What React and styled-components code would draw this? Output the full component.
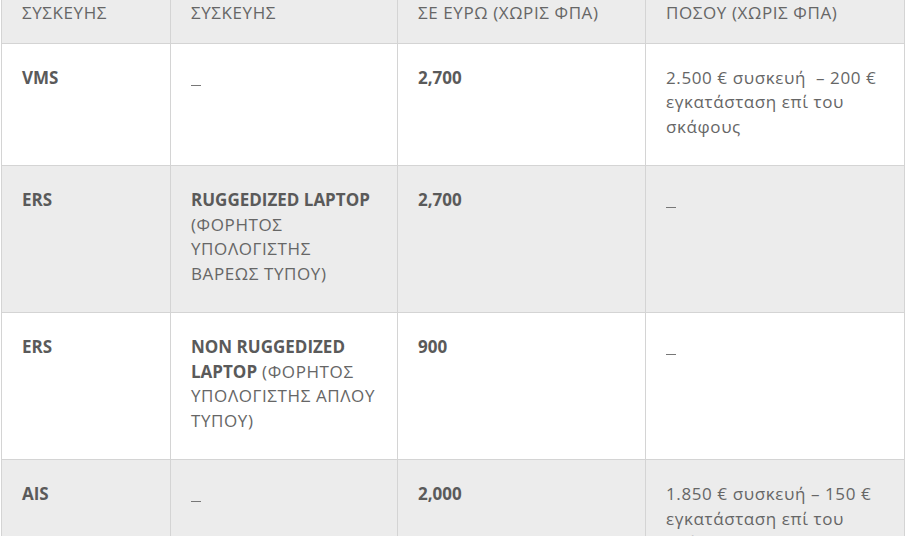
import styled, { createGlobalStyle } from "styled-components";

const GlobalStyle = createGlobalStyle`
  body {
    margin: 0;
    background: #fff;
    font-family: "Open Sans", "Noto Sans", sans-serif;
    color: #666;
  }
`;

const PriceTable = styled.table`
  margin-left: 1px;
  width: 903px;
  border-collapse: collapse;
  table-layout: fixed;
  font-size: 17px;
  line-height: 24.5px;
  letter-spacing: 0.6px;
`;

const HeadCell = styled.th`
  text-align: left;
  font-weight: 400;
  color: #666;
  background: #ececec;
  border: 1px solid #d4d4d4;
  border-top: none;
  padding: 1px 20px 17px;
  vertical-align: top;
`;

const Row = styled.tr`
  background: ${(p) => (p.$shaded ? "#ececec" : "#fff")};
`;

const Cell = styled.td`
  border: 1px solid #d4d4d4;
  padding: 22px 20px 26px;
  vertical-align: top;
  color: #666;
`;

const Strong = styled.strong`
  font-weight: 700;
  color: #5a5a5a;
  letter-spacing: 0;
`;

const Dash = styled.span`
  display: inline-block;
  width: 10px;
  height: 1px;
  background: #777;
  vertical-align: -2px;
`;

const rows = [
  {
    type: "VMS",
    device: null,
    price: "2,700",
    note: "2.500 € συσκευή \u00a0– 200 € εγκατάσταση επί του σκάφους",
  },
  {
    type: "ERS",
    device: { bold: "RUGGEDIZED LAPTOP", rest: " (ΦΟΡΗΤΟΣ ΥΠΟΛΟΓΙΣΤΗΣ ΒΑΡΕΩΣ ΤΥΠΟΥ)" },
    price: "2,700",
    note: null,
  },
  {
    type: "ERS",
    device: { bold: "NON RUGGEDIZED LAPTOP", rest: " (ΦΟΡΗΤΟΣ ΥΠΟΛΟΓΙΣΤΗΣ ΑΠΛΟΥ ΤΥΠΟΥ)" },
    price: "900",
    note: null,
  },
  {
    type: "AIS",
    device: null,
    price: "2,000",
    note: "1.850 € συσκευή – 150 € εγκατάσταση επί του σκάφους",
  },
];

export default function App() {
  return (
    <>
      <GlobalStyle />
      <PriceTable>
        <colgroup>
          <col style={{ width: 169 }} />
          <col style={{ width: 227 }} />
          <col style={{ width: 248 }} />
          <col style={{ width: 259 }} />
        </colgroup>
        <thead>
          <tr>
            <HeadCell>ΣΥΣΚΕΥΗΣ</HeadCell>
            <HeadCell>ΣΥΣΚΕΥΗΣ</HeadCell>
            <HeadCell>ΣΕ ΕΥΡΩ (ΧΩΡΙΣ ΦΠΑ)</HeadCell>
            <HeadCell>ΠΟΣΟΥ (ΧΩΡΙΣ ΦΠΑ)</HeadCell>
          </tr>
        </thead>
        <tbody>
          {rows.map((r, i) => (
            <Row key={i} $shaded={i % 2 === 1}>
              <Cell>
                <Strong>{r.type}</Strong>
              </Cell>
              <Cell>
                {r.device ? (
                  <>
                    <Strong>{r.device.bold}</Strong>
                    {r.device.rest}
                  </>
                ) : (
                  <Dash />
                )}
              </Cell>
              <Cell>
                <Strong>{r.price}</Strong>
              </Cell>
              <Cell>{r.note ?? <Dash />}</Cell>
            </Row>
          ))}
        </tbody>
      </PriceTable>
    </>
  );
}
